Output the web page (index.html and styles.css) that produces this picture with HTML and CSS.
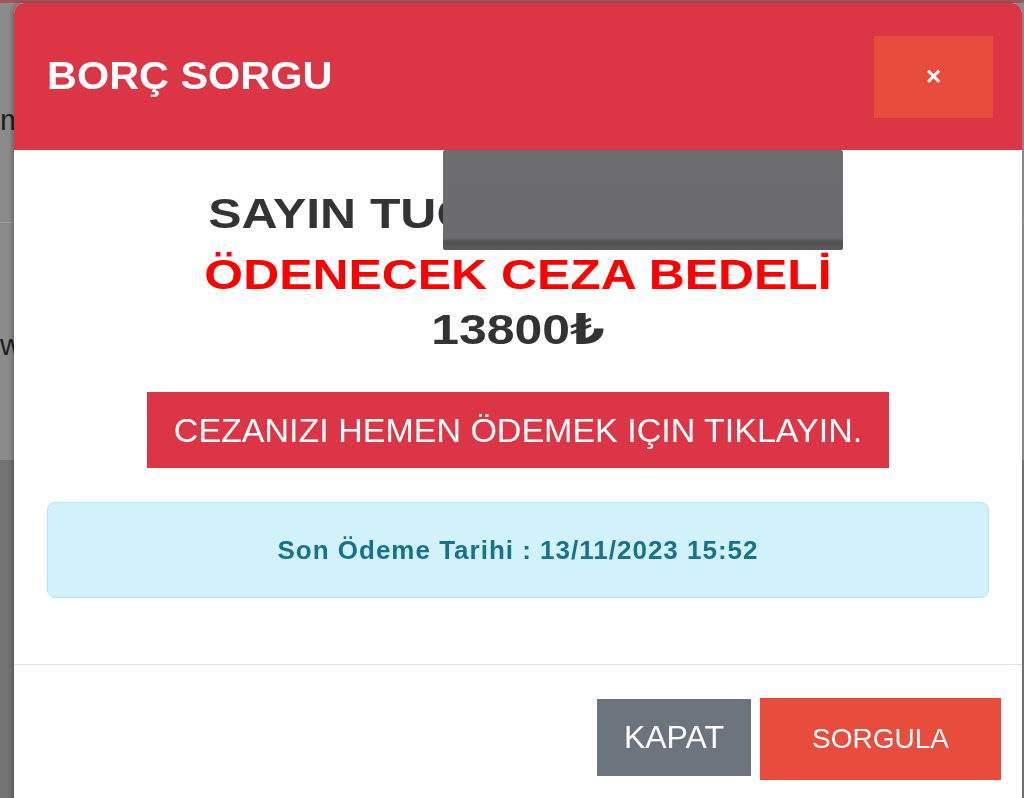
FILE: index.html
```html
<!DOCTYPE html>
<html lang="tr">
<head>
  <meta charset="UTF-8">
  <meta name="viewport" content="width=device-width, initial-scale=1.0">
  <title>Borç Sorgu</title>
  <link rel="stylesheet" href="styles.css">
</head>
<body>
  <!-- page behind the dialog, dimmed -->
  <div class="site">
    <div class="site-bar"></div>
    <div class="site-block top">
      <p class="site-text first">m</p>
      <p class="site-text second">w</p>
    </div>
    <div class="site-block bottom"></div>
  </div>

  <div class="modal">
    <div class="modal-header">
      <h1>BORÇ SORGU</h1>
      <button class="close">&times;</button>
    </div>

    <div class="modal-body">
      <h2 class="greeting">SAYIN TUĞ<span class="masked"></span></h2>
      <h2 class="fine-title">ÖDENECEK CEZA BEDELİ</h2>
      <h2 class="amount">13800₺</h2>

      <a class="pay-btn" href="#">CEZANIZI HEMEN ÖDEMEK IÇIN TIKLAYIN.</a>

      <div class="alert-info">Son Ödeme Tarihi : 13/11/2023 15:52</div>
    </div>

    <div class="modal-footer">
      <button class="btn btn-secondary">KAPAT</button>
      <button class="btn btn-query">SORGULA</button>
    </div>

    <div class="redact"></div>
  </div>
</body>
</html>
```

FILE: styles.css
```css
body {
  margin: 0;
  height: 798px;
  overflow: hidden;
  font-family: "Liberation Sans", Arial, "DejaVu Sans", sans-serif;
  background-color: #737373;
}
.site {
  width: 100%;
}
.site-bar {
  height: 3px;
  background-color: #a0565c;
}
.site-block.top {
  height: 457px;
  background-color: #8b8b8b;
  overflow: hidden;
}
.site-block.bottom {
  height: 338px;
  background-color: #737373;
}
.site-text {
  margin: 0;
  font-size: 30px;
  line-height: 34px;
  color: #1f1f1f;
}
.site-text.first {
  padding-top: 100px;
  padding-bottom: 85px;
  border-bottom: 1px solid #9c9c9c;
}
.site-text.second {
  padding-top: 105px;
}

.modal {
  position: fixed;
  top: 3px;
  left: 14px;
  width: 1008px;
  height: 840px;
  background-color: #fff;
  border-radius: 10px;
  overflow: hidden;
  box-shadow: -2px 0 4px rgba(0, 0, 0, 0.25);
}
.modal-header {
  height: 147px;
  display: flex;
  align-items: center;
  justify-content: space-between;
  padding: 0 29px 0 33px;
  background-color: #dc3545;
}
.modal-header h1 {
  margin: 0;
  font-size: 38px;
  color: #fff;
  transform: scaleX(1.09);
  transform-origin: left center;
}
.close {
  width: 119px;
  height: 82px;
  border: none;
  background-color: #e74c3c;
  color: #fff;
  font-family: "Liberation Sans", Arial, sans-serif;
  font-size: 26px;
  font-weight: bold;
  cursor: pointer;
}

.modal-body {
  padding: 37px 33px 66px;
  text-align: center;
}
.modal-body h2 {
  margin: 0;
  font-size: 43px;
  line-height: 52px;
  color: #333;
  transform: scaleX(1.16);
}
.greeting .masked {
  display: inline-block;
  width: 304px;
}
.fine-title {
  margin-top: 9px !important;
  color: #ff0000 !important;
}
.amount {
  margin-top: 3px !important;
}
.pay-btn {
  display: inline-block;
  margin-top: 37px;
  padding: 0 27px;
  line-height: 76px;
  font-size: 34px;
  color: #fff;
  text-decoration: none;
  background-color: #dc3545;
}
.alert-info {
  margin-top: 34px;
  height: 94px;
  line-height: 94px;
  border: 1px solid #b6e5f0;
  border-radius: 8px;
  background-color: #d1f2fa;
  color: #17738c;
  font-size: 26px;
  font-weight: bold;
  letter-spacing: 1px;
}

.modal-footer {
  display: flex;
  justify-content: flex-end;
  align-items: flex-start;
  gap: 9px;
  padding: 33px 21px 0 0;
  border-top: 1px solid #dee2e6;
}
.btn {
  border: none;
  color: #fff;
  font-family: "Liberation Sans", Arial, sans-serif;
  cursor: pointer;
}
.btn-secondary {
  margin-top: 1px;
  width: 154px;
  height: 77px;
  font-size: 32px;
  background-color: #6c757d;
}
.btn-query {
  width: 241px;
  height: 82px;
  font-size: 28px;
  background-color: #e74c3c;
}

/* name hidden on the screenshot */
.redact {
  position: absolute;
  left: 429px;
  top: 147px;
  width: 400px;
  height: 100px;
  border-radius: 2px;
  background: linear-gradient(#6d6d6f 0%, #6b6b6d 88%, #505052 92%, #5c5c5e 100%);
}
```
